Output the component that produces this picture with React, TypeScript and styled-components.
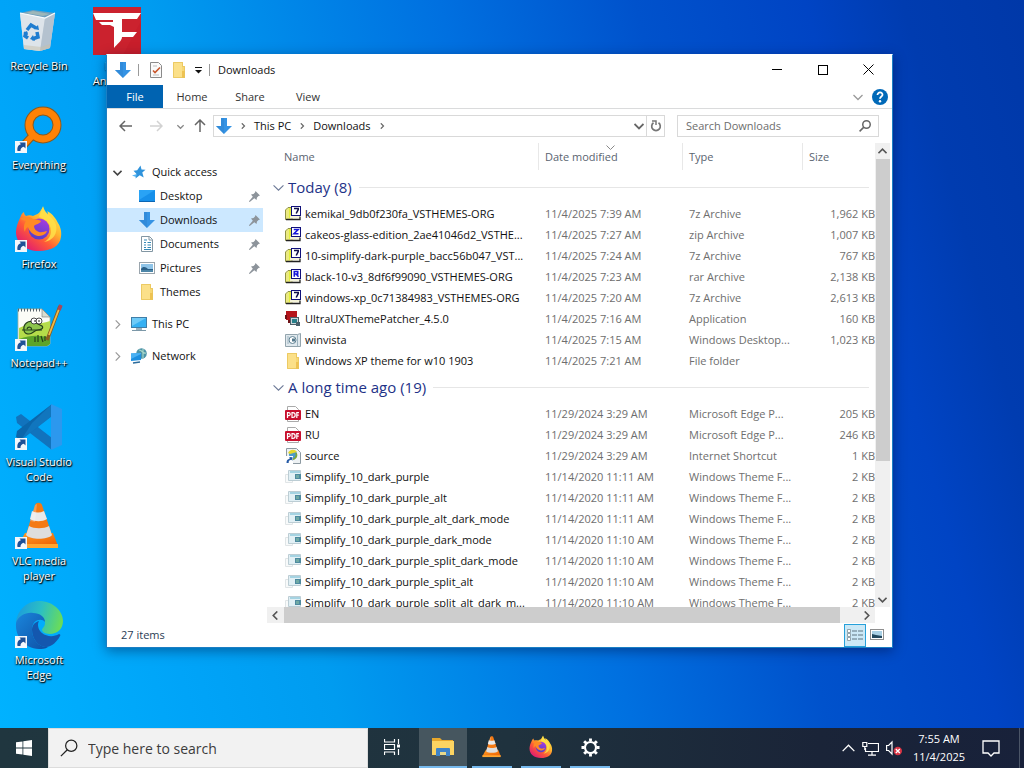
import React from "react";
import styled, { createGlobalStyle, css } from "styled-components";

const GlobalStyle = createGlobalStyle`
  * { box-sizing: border-box; }
  html, body, #root { height: 100%; }
  body {
    margin: 0;
    overflow: hidden;
    font-family: "Open Sans", "Noto Sans", sans-serif;
    font-size: 11px;
    line-height: 16px;
    color: #111;
  }
  button, input { font: inherit; color: inherit; border: 0; padding: 0; background: none; }
  svg { display: block; flex: none; }
`;

/* ---------- desktop ---------- */

const Screen = styled.div`
  height: 100vh;
  display: flex;
  flex-direction: column;
`;

const Desktop = styled.main`
  position: relative;
  flex: 1;
  min-height: 0;
  background: linear-gradient(75deg, #00b2ff 0%, #00a4f8 16%, #009cf0 28%, #0070e0 52%, #0052cc 68%, #0044c4 82%, #003cb0 90%, #0038a8 100%);
`;

const ShortcutGrid = styled.div`
  display: grid;
  grid-template-rows: repeat(7, 99px);
  grid-auto-flow: column;
  grid-auto-columns: 78px;
  height: 100%;
`;

const Shortcut = styled.button`
  display: flex;
  flex-direction: column;
  align-items: center;
  gap: 3px;
  padding-top: 7px;
  line-height: 15px;
  color: #fff;
  text-align: center;
  text-shadow: 0 1px 2px #000, 1px 1px 1px #000;
`;

const ShortcutLabel = styled.span`
  white-space: pre-line;
  width: 78px;
`;

/* ---------- explorer window ---------- */

const Window = styled.section`
  position: absolute;
  left: 106px;
  top: 54px;
  right: 131px;
  bottom: 80px;
  display: flex;
  flex-direction: column;
  background: #fff;
  border: 1px solid #1b7fc4;
  border-top-color: #fff;
  box-shadow: 0 3px 12px rgba(0, 0, 40, 0.4);
`;

const TitleBar = styled.header`
  display: flex;
  align-items: center;
  height: 30px;
  padding-left: 8px;
`;

const QuickTools = styled.div`
  display: flex;
  align-items: center;
  gap: 7px;
  padding-right: 8px;
`;

const Divider = styled.span`
  width: 1px;
  height: 12px;
  background: #9a9a9a;
  &:nth-child(2) { margin-right: 2px; }
`;

const WindowTitle = styled.h1`
  flex: 1;
  margin: 0;
  font-size: 11px;
  font-weight: 400;
`;

const CaptionButton = styled.button`
  width: 46px;
  height: 30px;
  display: flex;
  align-items: center;
  justify-content: center;
`;

const Ribbon = styled.nav`
  display: flex;
  align-items: stretch;
  height: 24px;
  border-bottom: 1px solid #dadbdc;
`;

const RibbonTab = styled.button<{ $file?: boolean }>`
  width: 58px;
  color: #333;
  ${(p) => p.$file && css`
    width: 56px;
    color: #fff;
    background: #0063b1;
  `}
`;

const RibbonEnd = styled.div`
  display: flex;
  align-items: center;
  gap: 9px;
  margin-left: auto;
  padding-right: 4px;
`;

const AddressRow = styled.div`
  display: flex;
  align-items: center;
  height: 34px;
  padding: 0 13px 0 4px;
`;

const Arrows = styled.div`
  display: flex;
  align-items: center;
  width: 102px;
`;

const Plain = styled.button`
  display: flex;
  align-items: center;
  justify-content: center;
`;

const ArrowButton = styled(Plain)<{ $width: number }>`
  width: ${(p) => p.$width}px;
  height: 22px;
`;

const AddressBox = styled.div`
  flex: 1;
  display: flex;
  align-items: center;
  height: 22px;
  border: 1px solid #d9d9d9;
`;

const Crumbs = styled.div`
  flex: 1;
  display: flex;
  align-items: center;
  gap: 8px;
  padding-left: 2px;
`;

const Refresh = styled(Plain)`
  width: 18px;
  height: 20px;
  margin-left: 2px;
  border-left: 1px solid #d9d9d9;
`;

const SearchBox = styled.label`
  display: flex;
  align-items: center;
  width: 202px;
  height: 22px;
  margin-left: 12px;
  padding: 0 7px 0 8px;
  border: 1px solid #d9d9d9;
  input {
    flex: 1;
    min-width: 0;
    outline: none;
  }
  input::placeholder { color: #6d6d6d; opacity: 1; }
`;

const Body = styled.div`
  flex: 1;
  display: flex;
  min-height: 0;
`;

const NavPane = styled.aside`
  width: 160px;
  padding: 17px 4px 0 0;
`;

const NavItem = styled.a<{ $depth?: number; $active?: boolean }>`
  display: flex;
  align-items: center;
  height: 24px;
  padding: 0 3px 0 ${(p) => (p.$depth ? 32 : 6)}px;
  gap: ${(p) => (p.$depth ? 5 : 0)}px;
  margin-bottom: ${(p) => (p.$depth ? 0 : 8)}px;
  color: inherit;
  text-decoration: none;
  background: ${(p) => (p.$active ? "#cce8ff" : "none")};
`;

const NavGroup = styled.div`
  margin: -8px 0 8px;
`;

const NavLabel = styled.span`
  flex: 1;
`;

const NavSymbol = styled.span`
  display: flex;
  justify-content: center;
  width: 18px;
  margin: 0 4px 0 8px;
`;

const ListPane = styled.div`
  flex: 1;
  min-width: 0;
  display: grid;
  grid-template-columns: minmax(0, 1fr) 15px;
  grid-template-rows: minmax(0, 1fr) 16px;
  padding-right: 2px;
`;

const ListView = styled.div`
  overflow: hidden;
`;

const Table = styled.table`
  width: 100%;
  table-layout: fixed;
  border-collapse: collapse;
  td, th { padding: 0; white-space: nowrap; font-weight: 400; text-align: left; }
  td { height: 21px; }
`;

const HeadCell = styled.th<{ $wide?: boolean }>`
  height: 28px;
  vertical-align: top;
  color: #5a6470;
  div {
    display: flex;
    flex-direction: column;
    justify-content: center;
    height: 27px;
    padding-left: ${(p) => (p.$wide ? 17 : 6)}px;
    border-right: 1px solid #e8e8e8;
  }
  &:last-child div { border-right-color: transparent; }
`;

const SortMark = styled.svg`
  position: absolute;
  left: 499px;
  top: 90px;
`;

const GroupHead = styled.th`
  height: 32px;
  color: #1e3287;
  font-size: 15px;
  div {
    display: flex;
    align-items: center;
    gap: 4px;
    padding: 0 6px;
  }
  div::after {
    content: "";
    flex: 1;
    height: 1px;
    margin-left: 3px;
    background: #e6e6e6;
  }
`;

const NameCell = styled.td`
  div {
    display: flex;
    align-items: center;
    gap: 4px;
    padding-left: 18px;
  }
`;

const MetaCell = styled.td<{ $end?: boolean }>`
  color: #6e6e6e;
  && {
    padding-left: ${(p) => (p.$end ? 0 : 6)}px;
    text-align: ${(p) => (p.$end ? "right" : "left")};
  }
`;

const VScroll = styled.div`
  display: flex;
  flex-direction: column;
  align-items: center;
  background: #f0f0f0;
`;

const VThumb = styled.div`
  width: 14px;
  flex: 0 0 65%;
  background: #cdcdcd;
`;

const ScrollTrack = styled.div`
  flex: 1;
`;

const HScroll = styled.div`
  display: flex;
  background: #f0f0f0;
`;

const HThumb = styled.div`
  flex: 1;
  margin-right: 18px;
  background: #cdcdcd;
`;

const ScrollButton = styled(Plain)`
  width: 17px;
  height: 16px;
`;

const StatusBar = styled.footer`
  display: flex;
  align-items: center;
  height: 24px;
  padding: 0 4px 0 14px;
  color: #2b3c55;
  span { flex: 1; }
`;

const ViewButton = styled(Plain)<{ $on?: boolean }>`
  width: 22px;
  height: 23px;
  border: 1px solid ${(p) => (p.$on ? "#26a0da" : "transparent")};
  background: ${(p) => (p.$on ? "#cbe8f6" : "none")};
`;

/* ---------- taskbar ---------- */

const Taskbar = styled.footer`
  display: flex;
  height: 40px;
  background: linear-gradient(90deg, #20363f 0%, #1f323e 50%, #1a2438 80%, #18213a 100%);
  color: #fff;
`;

const StartButton = styled(Plain)`
  width: 48px;
`;

const TaskSearch = styled.label`
  display: flex;
  align-items: center;
  gap: 10px;
  width: 320px;
  padding-left: 11px;
  border: 1px solid #dcdcdc;
  background: #f2f2f2;
  color: #333;
  font-size: 14px;
  input { flex: 1; min-width: 0; height: 24px; outline: none; }
  input::placeholder { color: #3c3c3c; opacity: 1; }
`;

const TaskApps = styled.div`
  display: flex;
  gap: 1px;
  flex: 1;
`;

const TaskButton = styled.button<{ $running?: boolean; $active?: boolean }>`
  display: flex;
  flex-direction: column;
  align-items: center;
  justify-content: center;
  width: 48px;
  background: ${(p) => (p.$active ? "#46565f" : "none")};
  &:first-child { margin-right: 2px; }
  svg { margin: auto; }
  &::after {
    content: "";
    width: ${(p) => (p.$active ? 48 : 40)}px;
    height: 2px;
    background: ${(p) => (p.$running ? "#76b9ed" : "transparent")};
  }
`;

const Tray = styled.div`
  display: flex;
  align-items: center;
  gap: 7px;
  padding-right: 4px;
`;

const Clock = styled.time`
  width: 60px;
  line-height: 18px;
  text-align: center;
`;

const NoticeButton = styled(Plain)`
  width: 30px;
  margin-right: 6px;
`;

const PeekEdge = styled.span`
  width: 1px;
  height: 40px;
  background: #4b5567;
`;

/* ---------- icons ---------- */

const ShortcutBadge = () => (
  <g>
    <rect x="0" y="35" width="12" height="12" fill="#f4f7fb" />
    <path d="M2.500 45c-.6-4 1-6.300 3.500-6.800L4.500 36.600l6-.1v6l-1.700-1.700C6.500 41.200 5.300 42.800 5.500 45z" fill="#1f5096" />
  </g>
);

const RecycleIcon = () => (
  <svg width="48" height="48" viewBox="0 0 48 48">
    <path d="M5 6l35 0-5 35-10 3-16-2z" fill="#cdd6df" />
    <path d="M5 6l13-3 22 3-10 5z" fill="#6f9fbd" />
    <path d="M10 6l8-2 17 3-7 2z" fill="#9db7b9" />
    <path d="M5 6l25 5-5 33-16-2z" fill="#dde4ea" />
    <path d="M30 11l10-5-5 35-10 3z" fill="#b4c2cf" />
    <path d="M5 6l25 5 10-5" fill="none" stroke="#f8fbfd" strokeWidth="1.200" />
    <path d="M9 38l17 2 9-3v4l-10 3-16-2z" fill="#c8bfa9" opacity=".5" />
    <g fill="none" stroke="#1f7dd0" strokeWidth="3.500">
      <path d="M12 23l4-5 5 3" /><path d="M22 25l1 5-6 2" /><path d="M13 31l-3-2 1-4" />
    </g>
    <path d="M19 22l5 1-1-5zM18 28l-3 4 5 2zM8 26l4-2 1 4z" fill="#1f7dd0" />
  </svg>
);

const FazeIcon = () => (
  <svg width="48" height="48" viewBox="0 0 48 48">
    <rect width="48" height="48" fill="#c81e2b" />
    <path d="M0 0h48v14L30 48H0z" fill="#cd2530" opacity=".6" />
    <path d="M0 6h48l-4 6H29v13h15l-4 5H29c0 4-5 7-8 11V20l-4-2H9l-3-3h14v-2H3z" fill="#fff" />
  </svg>
);

const EverythingIcon = () => (
  <svg width="48" height="48" viewBox="0 0 48 48">
    <path d="M20 27L6 42" stroke="#8a5a1e" strokeWidth="8" />
    <circle cx="28" cy="19" r="14" fill="none" stroke="#8a5a1e" strokeWidth="9" />
    <path d="M20 27L6 42" stroke="#ff8206" strokeWidth="6" />
    <circle cx="28" cy="19" r="14" fill="none" stroke="#ff8206" strokeWidth="7" />
    <ShortcutBadge />
  </svg>
);

const FirefoxShape = () => (
  <>
    <defs>
      <linearGradient id="ffBody" x1=".85" y1=".1" x2=".2" y2=".9">
        <stop offset="0" stopColor="#ffe94a" /><stop offset=".35" stopColor="#ffb32e" />
        <stop offset=".65" stopColor="#ff5b36" /><stop offset="1" stopColor="#e3206e" />
      </linearGradient>
      <linearGradient id="ffGlobe" x1=".7" y1="0" x2=".3" y2="1">
        <stop offset="0" stopColor="#a63be0" /><stop offset="1" stopColor="#5040c8" />
      </linearGradient>
    </defs>
    <path d="M5 13c1-3 2-5 4-6 0 2 1 3 2 4 2-1 5-1 7 0 3-1 6-3 6-3l4-6c1 4 4 7 5 8 0-3-1-4-1-4 6 3 9 8 11 12 2 3 4 8 3 14-1 9-10 14-22 14C10 46 1 38 1 27c0-5 2-10 4-14z" fill="url(#ffBody)" />
    <path d="M28 1c-1 4-3 7-4 11 6 2 12 6 12 14 0 5-3 9-7 11 9-1 14-9 12-17-1-4-5-8-8-11-3-2-4-5-5-8z" fill="#ffe049" opacity=".85" />
    <circle cx="24" cy="24" r="10.500" fill="url(#ffGlobe)" />
    <path d="M5 14c5-3 10-3 13 0 4 0 6 1 8 2-1 3-5 3-7 5 0 3 2 5 5 6 3 1 6-1 8-1-1 4-6 5-9 5-5-1-9-5-10-9-2 1-3 3-3 5-2-4-1-8 1-11z" fill="#ff8a24" />
  </>
);

const FirefoxIcon = () => (
  <svg width="48" height="48" viewBox="0 0 48 48"><FirefoxShape /><ShortcutBadge /></svg>
);

const NotepadIcon = () => (
  <svg width="48" height="48" viewBox="0 0 48 48">
    <path d="M3 5h24l8 8v27l-3 2H3z" fill="#fbfcf7" stroke="#aab49a" strokeWidth=".8" />
    <path d="M4 24c9-5 20-3 31-7v23l-3 2H4z" fill="#b5dc4a" />
    <path d="M4 35c12-4 20-4 31-1v6l-3 2H4z" fill="#5ca42b" />
    <path d="M3 6h24" stroke="#59646d" strokeWidth="3" strokeDasharray="1 2" />
    <path d="M27 5v8h8z" fill="#d8ddd0" stroke="#777" strokeWidth=".6" />
    <path d="M9 26c-1-6 4-10 10-8l8 4c2 2-1 4-4 4-4 0-5 4-9 4-2 0-5-1-5-4z" fill="#8cc44c" stroke="#26401a" strokeWidth="1.200" />
    <path d="M12 25c1-3 6-2 4 1M7 26h20M20 33v5M23 31v7M26 32l2 6M30 32v5" fill="none" stroke="#26401a" strokeWidth="1.200" />
    <circle cx="19" cy="17" r="3" fill="#fff" stroke="#222" strokeWidth=".8" /><circle cx="24" cy="17" r="3" fill="#fff" stroke="#222" strokeWidth=".8" />
    <circle cx="20" cy="17" r=".8" /><circle cx="24" cy="17" r=".8" />
    <path d="M45 2L34 31l-2 5" fill="none" stroke="#8a5c20" strokeWidth="3.500" />
    <path d="M44 5L34 31" stroke="#f0bb48" strokeWidth="1.800" />
    <path d="M46 1l-2 5" stroke="#a8485a" strokeWidth="3.500" />
    <ShortcutBadge />
  </svg>
);

const VsCodeIcon = () => (
  <svg width="48" height="48" viewBox="0 0 48 48">
    <path d="M1 14l5-3 31 24v12L2 20z" fill="#1173bd" />
    <path d="M1 34l5 3 31-24V1L2 28z" fill="#0b66ab" />
    <path d="M6 37l31-24V1L17 20z" fill="#1580cc" opacity=".6" />
    <path d="M36 1l11 5v36l-11 5z" fill="#2c98ee" />
    <ShortcutBadge />
  </svg>
);

const ConeShape = () => (
  <>
    <defs>
      <linearGradient id="coneBase" x1="0" y1="0" x2="1" y2="1">
        <stop offset="0" stopColor="#ff9f27" /><stop offset="1" stopColor="#ec5c00" />
      </linearGradient>
    </defs>
    <path d="M10 31h28l5 13H3z" fill="url(#coneBase)" />
    <path d="M3 42h40v4H3z" fill="#ffa630" />
    <path d="M20 3c1-3 6-3 7 0l10 30c-3 5-23 5-26 0z" fill="#f47a14" />
    <path d="M17 9c4 2 8 2 12 0l3 8c-5 3-12 3-17 0z" fill="#e9e9e9" />
    <path d="M14 24c5 3 15 3 20 0l3 9c-4 5-22 5-26 0z" fill="#dedede" />
    <path d="M20 3l-5 16 5 1 2-18z" fill="#fff" opacity=".25" />
  </>
);

const VlcIcon = () => (
  <svg width="48" height="48" viewBox="0 0 48 48"><ConeShape /><ShortcutBadge /></svg>
);

const EdgeIcon = () => (
  <svg width="48" height="48" viewBox="0 0 48 48">
    <defs>
      <linearGradient id="edgeTop" x1="0" y1=".3" x2="1" y2=".5">
        <stop offset="0" stopColor="#1c9bdd" /><stop offset=".5" stopColor="#2bbfc4" /><stop offset="1" stopColor="#6bdc58" />
      </linearGradient>
      <linearGradient id="edgeLow" x1="0" y1="0" x2="1" y2="1">
        <stop offset="0" stopColor="#1a86dc" /><stop offset="1" stopColor="#0e4fa4" />
      </linearGradient>
    </defs>
    <path d="M1 22C2 9 12 0 24 0c14 0 24 10 24 20 0 8-6 13-13 13-6 0-8-3-8-4 0-2 3-3 3-7 0-5-5-9-11-9-8 0-15 3-18 9z" fill="url(#edgeTop)" />
    <path d="M1 22c2-7 10-11 17-10 7 0 12 4 12 9-3-4-13-3-13 8 0 9 7 18 16 17-3 2-6 2-9 2C9 47 0 36 1 22z" fill="url(#edgeLow)" />
    <path d="M17 29c0-5 3-8 7-9-2 3-1 9 3 12 5 4 12 4 17 1 1 0 2 1 1 2-3 6-8 10-13 11-8 1-15-8-15-17z" fill="#1457ae" />
    <ShortcutBadge />
  </svg>
);

const DownArrow = ({ size = 16 }: { size?: number }) => (
  <svg width={size} height={size} viewBox="0 0 16 16">
    <path d="M5 0h6v8h5l-8 8-8-8h5z" fill="#3593e4" />
    <path d="M5 0h3v16L0 8h5z" fill="#2f86d3" opacity=".6" />
  </svg>
);

const Chevron = ({ dir, size = 8, color = "#555", weight = 1.3 }: { dir: "right" | "down" | "up" | "left"; size?: number; color?: string; weight?: number }) => {
  const turn = { right: 0, down: 90, left: 180, up: 270 }[dir];
  return (
    <svg width={size} height={size} viewBox="0 0 10 10">
      <path d="M3 .5L7.500 5 3 9.500" transform={`rotate(${turn} 5 5)`} fill="none" stroke={color} strokeWidth={weight} />
    </svg>
  );
};

const FolderIcon = () => (
  <svg width="16" height="16" viewBox="0 0 16 16">
    <path d="M2 0h10v4h2v12H2z" fill="#f7d774" />
    <path d="M2 0h9v16H2z" fill="#fbe089" />
    <path d="M11 9h3v7h-3z" fill="#eec252" />
    <path d="M2.500 .5h9v4h2v11h-11z" fill="none" stroke="#e9c45a" strokeWidth=".8" />
  </svg>
);

const PropsIcon = () => (
  <svg width="16" height="16" viewBox="0 0 16 16">
    <path d="M2.500 .5h8l3 3v12h-11z" fill="#fafafa" stroke="#8a8a8a" />
    <path d="M5 8.500l2 2 5-5" fill="none" stroke="#c9572c" strokeWidth="1.600" />
    <path d="M5 4h4M5 13h6" stroke="#bbb" />
  </svg>
);

const ToolbarMenuIcon = () => (
  <svg width="8" height="8" viewBox="0 0 8 8"><path d="M1 1.500h7" stroke="#111" /><path d="M1 4h7L4.500 7.500z" fill="#111" /></svg>
);

const NavArrow = ({ dir, color }: { dir: "left" | "right" | "up"; color: string }) => (
  <svg width="14" height="14" viewBox="0 0 14 14">
    <path d="M1 7h12M6 2L1 7l5 5" transform={`rotate(${{ left: 0, up: 90, right: 180 }[dir]} 7 7)`} fill="none" stroke={color} strokeWidth="1.500" />
  </svg>
);

const RefreshIcon = () => (
  <svg width="12" height="12" viewBox="0 0 12 12">
    <path d="M3.500 2.800A4.300 4.300 0 1 0 8.500 2.800" fill="none" stroke="#777" strokeWidth="1.700" />
    <path d="M2 1h4v4" fill="none" stroke="#777" strokeWidth="1.500" />
  </svg>
);

const Magnifier = ({ size = 14, color = "#555", weight = 1.4 }: { size?: number; color?: string; weight?: number }) => (
  <svg width={size} height={size} viewBox="0 0 16 16">
    <circle cx="10" cy="6" r="5" fill="none" stroke={color} strokeWidth={weight} />
    <path d="M6.500 9.500L.8 15.200" stroke={color} strokeWidth={weight} />
  </svg>
);

const HelpIcon = () => (
  <svg width="16" height="16" viewBox="0 0 16 16">
    <circle cx="8" cy="8" r="8" fill="#0069b8" />
    <path d="M5.500 6c0-3.500 5.300-3.300 5 0C10.300 7.500 8 7.600 8 9.800" fill="none" stroke="#fff" strokeWidth="1.800" />
    <circle cx="8" cy="12.200" r="1.200" fill="#fff" />
  </svg>
);

const StarIcon = () => (
  <svg width="14" height="14" viewBox="0 0 14 14">
    <path d="M8.500 .5l1 4 4 .3-3.200 2.700 1.400 5-4-2.300L3.500 13.500l.8-4.700L1.500 5.800l3.700-.6z" fill="#2f93dc" />
    <path d="M0 10.500l5-1.500-1 3z" fill="#55b4f2" />
  </svg>
);

const DesktopGlyph = () => (
  <svg width="16" height="16" viewBox="0 0 16 16">
    <rect x="0" y="2" width="16" height="12" fill="#1690ea" /><path d="M0 2h16L0 12z" fill="#29a3f5" /><path d="M0 13.500h16" stroke="#0b66b4" />
  </svg>
);

const DocumentGlyph = () => (
  <svg width="16" height="16" viewBox="0 0 16 16">
    <path d="M2.500 .5h8l3 3v12h-11z" fill="#fff" stroke="#8296a3" />
    <path d="M5 4h3M5 6.500h2M8.500 6.500H12M5 9h2M8.500 9H12M5 11.500h2M8.500 11.500H12M5 13.500h7" stroke="#3487b5" strokeWidth="1.200" />
    <path d="M10 .5v3.500h3.500" fill="none" stroke="#8296a3" />
  </svg>
);

const PictureGlyph = () => (
  <svg width="16" height="16" viewBox="0 0 16 16">
    <rect x=".5" y="2.500" width="15" height="11" fill="#fff" stroke="#9aa5ad" />
    <rect x="2" y="4" width="12" height="8" fill="#8fc4e8" /><path d="M2 9c2-3 5-2 7 0h5v3H2z" fill="#2b5f86" /><path d="M2 10h12v2H2z" fill="#4d86a8" />
  </svg>
);

const ComputerGlyph = () => (
  <svg width="16" height="16" viewBox="0 0 16 16">
    <rect x=".5" y="1.500" width="15" height="10" fill="#36b0f2" stroke="#3f7ea8" /><path d="M1 2h14L1 10z" fill="#6fcaf7" />
    <path d="M5 12h6v2H5z" fill="#9cb1bd" /><path d="M1 14.500h14" stroke="#7c98a8" />
  </svg>
);

const NetworkGlyph = () => (
  <svg width="16" height="16" viewBox="0 0 16 16">
    <circle cx="10.500" cy="5.500" r="5.300" fill="#4c93a8" /><path d="M8 2c4 0 3 4 7 3M12 1v9" fill="none" stroke="#a6d6c7" strokeWidth="1.200" />
    <path d="M0 5.500l10-.5v7L0 13z" fill="#1d8fe0" /><path d="M0 5.500l10-.5v1L0 11z" fill="#4ab1f3" /><path d="M2 15l7-1" stroke="#2c6c9c" strokeWidth="1.500" />
  </svg>
);

const PinGlyph = () => (
  <svg width="11" height="11" viewBox="0 0 11 11">
    <path d="M6.500 0L11 4.500 9.500 5 8 6.500 7.500 9 5.300 7.200 1 10.800 0 11l.2-1L3.800 5.700 2 3.500 4.500 3 6 1.500z" fill="#8d949b" />
  </svg>
);

const ArchiveIcon = ({ mark }: { mark: "7" | "Z" | "R" }) => {
  const path = { "7": "M9 2.500h4.200v1L11.200 7.500", Z: "M8.800 2.500h4.400L8.900 6.800h4.600", R: "M9.300 7.700v-5.200h3.400v2.500H9.300M11.200 5l2.300 2.700" }[mark];
  return (
    <svg width="16" height="16" viewBox="0 0 16 16">
      <path d="M.5 4L3 1.500h4v12H.5z" fill="#ebea80" stroke="#8f9148" />
      <path d="M4 2h3v10H4z" fill="#e3ee3a" />
      <path d="M5 9.500h10v3H5z" fill="#f4f3d8" />
      <path d="M1 13.500h14v-3" fill="none" stroke="#222" strokeWidth="1.300" />
      <rect x="6.500" y=".5" width="9" height="9" fill="#fff" stroke="#10107a" />
      <path d={path} fill="none" stroke={mark === "7" ? "#10104a" : "#1717d8"} strokeWidth="1.600" />
    </svg>
  );
};

const PatcherIcon = () => (
  <svg width="16" height="16" viewBox="0 0 16 16">
    <rect x="1" y="0" width="11" height="9" fill="#b5161c" /><path d="M0 4h2v4H0zM3 9h5v3H3z" fill="#6d1216" />
    <rect x="5.500" y="6.500" width="8" height="7" fill="#c9d4d8" stroke="#4b5f68" /><rect x="7" y="8" width="5" height="4" fill="#277f8a" />
    <path d="M11 11h4v4h-4z" fill="#49606b" />
  </svg>
);

const WinVistaIcon = () => (
  <svg width="16" height="16" viewBox="0 0 16 16">
    <path d="M.5 2.500h12l3-1v13H.5z" fill="#dfe8ed" stroke="#93a4ad" />
    <circle cx="7.500" cy="8" r="3.500" fill="#fff" stroke="#5f8192" /><path d="M7 6.500h3v3H7z" fill="#55798c" /><path d="M12.500 3v11M3 4v8" stroke="#9eb4c0" />
  </svg>
);

const PdfIcon = () => (
  <svg width="16" height="16" viewBox="0 0 16 16">
    <path d="M2.500 5V.5h8l3 3V15.500h-11z" fill="#fff" stroke="#aaa" />
    <rect x="0" y="4" width="16" height="10" rx="1" fill="#c8102e" />
    <path d="M2.500 12V6.700h1.300a1.300 1.300 0 0 1 0 2.900H2.500M7 6.700V11.500h.8a2.300 2.300 0 0 0 0-4.800zM11.800 12V6.700H14M11.800 9.200h2" fill="none" stroke="#fff" strokeWidth="1.200" />
  </svg>
);

const LinkIcon = () => (
  <svg width="16" height="16" viewBox="0 0 16 16">
    <path d="M1.500 .5h10l4 4v11h-14z" fill="#eef2f4" stroke="#8c99a1" />
    <circle cx="8" cy="6.500" r="4" fill="#4c9bc9" /><path d="M3 5c2-4 7-4 9-1L5 6z" fill="#e4d72c" /><path d="M11 5c2 4-2 7-5 6" fill="none" stroke="#7aa43a" strokeWidth="1.500" />
    <rect x="0" y="8" width="8" height="8" fill="#fff" /><path d="M1.500 15c0-3 1-4 3-4V9l3 .2v3.600l-1.200-1C4 12 3.500 13.500 3.700 15z" fill="#2459a5" />
  </svg>
);

const ThemeIcon = () => (
  <svg width="16" height="16" viewBox="0 0 16 16">
    <path d="M.5 5.500h7v8h-7z" fill="#f8fafa" stroke="#e0e5e7" />
    <path d="M3.500 1.500h12v10h-12z" fill="#e2f0f5" stroke="#bccdd4" />
    <path d="M5 2h10v2H5z" fill="#a5d3e2" /><path d="M10 5h6v5h-6z" fill="#4d8aa0" /><path d="M11 6h3v3h-3z" fill="#6fa9a4" />
  </svg>
);

const DetailsViewIcon = () => (
  <svg width="16" height="14" viewBox="0 0 16 14">
    <path d="M.5 1.500h3v3h-3zM.5 5.500h3v3h-3zM.5 9.500h3v3h-3z" fill="#fff" stroke="#7d8f98" strokeWidth=".8" />
    <path d="M5 3h5M11 3h5M5 7h5M11 7h5M5 11h5M11 11h5" stroke="#5f7480" />
  </svg>
);

const ThumbViewIcon = () => (
  <svg width="14" height="12" viewBox="0 0 14 12">
    <rect x=".5" y=".5" width="13" height="10" fill="#fff" stroke="#8f8f8f" /><rect x="2" y="2" width="10" height="7" fill="#a9d0e5" /><path d="M2 5l4 1 6 1v2H2z" fill="#22485e" />
  </svg>
);

const StartIcon = () => (
  <svg width="16" height="16" viewBox="0 0 16 16">
    <path d="M0 2.300l6.500-.9v6.200H0zM7.300 1.300L16 0v7.600H7.300zM0 8.400h6.500v6.200L0 13.700zM7.300 8.400H16V16l-8.700-1.300z" fill="#fff" />
  </svg>
);

const TaskViewIcon = () => (
  <svg width="17" height="16" viewBox="0 0 17 16">
    <path d="M.5 0v3h10V0M.5 16v-3h10v3M.5 5.500h10v5H.5zM14.500 0v5M14.500 10v6" fill="none" stroke="#fff" strokeWidth="1.200" />
    <rect x="13" y="5.500" width="3" height="3" fill="#fff" />
  </svg>
);

const ExplorerIcon = () => (
  <svg width="22" height="20" viewBox="0 0 22 20">
    <path d="M0 1h8l2 2h11v6H0z" fill="#e8a82c" /><path d="M0 4h22v14H0z" fill="#fcd462" />
    <path d="M4 12q0-1 1-1h12q1 0 1 1v7h-4v-4H8v4H4z" fill="#3f84c8" /><path d="M8 15h6v3H8z" fill="#e8d98a" />
  </svg>
);

const SettingsIcon = () => (
  <svg width="19" height="19" viewBox="0 0 20 20">
    <circle cx="10" cy="10" r="5.800" fill="none" stroke="#fff" strokeWidth="2.200" />
    <g stroke="#fff" strokeWidth="3">
      <path d="M10 .5v3M10 16.500v3M.5 10h3M16.500 10h3M3.300 3.300l2.300 2.300M14.400 14.400l2.300 2.300M3.300 16.700l2.300-2.300M14.400 5.600l2.300-2.300" />
    </g>
  </svg>
);

const TrayNetIcon = () => (
  <svg width="17" height="15" viewBox="0 0 17 15">
    <path d="M6 2.500h10.500v8H3.500V7M10 10.500v3.500M6 14.200h8" fill="none" stroke="#fff" strokeWidth="1.200" />
    <path d="M.8 1.500h4v4h-4zM2.800 5.500V9" fill="none" stroke="#fff" strokeWidth="1.200" />
  </svg>
);

const TrayMuteIcon = () => (
  <svg width="16" height="16" viewBox="0 0 16 16">
    <path d="M.6 5.500h2L6 2v12l-3.400-3.500h-2z" fill="none" stroke="#fff" strokeWidth="1.200" />
    <circle cx="11.800" cy="11" r="4.200" fill="#d93444" /><path d="M9.800 9l4 4M13.800 9l-4 4" stroke="#fff" strokeWidth="1.300" />
  </svg>
);

const NoticeIcon = () => (
  <svg width="18" height="17" viewBox="0 0 18 17">
    <path d="M1 1h16v12h-5l-3 3-3-3H1z" fill="none" stroke="#fff" strokeWidth="1.300" />
  </svg>
);

/* ---------- content ---------- */

const shortcuts: { label: string; icon: React.ReactNode }[] = [
  { label: "Recycle Bin", icon: <RecycleIcon /> },
  { label: "Everything", icon: <EverythingIcon /> },
  { label: "Firefox", icon: <FirefoxIcon /> },
  { label: "Notepad++", icon: <NotepadIcon /> },
  { label: "Visual Studio\nCode", icon: <VsCodeIcon /> },
  { label: "VLC media\nplayer", icon: <VlcIcon /> },
  { label: "Microsoft\nEdge", icon: <EdgeIcon /> },
  { label: "FaZe\nAnticheat", icon: <FazeIcon /> },
];

const quickLinks = [
  { label: "Desktop", icon: <DesktopGlyph />, pinned: true },
  { label: "Downloads", icon: <DownArrow />, pinned: true, active: true },
  { label: "Documents", icon: <DocumentGlyph />, pinned: true },
  { label: "Pictures", icon: <PictureGlyph />, pinned: true },
  { label: "Themes", icon: <FolderIcon />, pinned: false },
];

type FileRow = [React.ReactNode, string, string, string, string];

const theme = (name: string, time: string): FileRow => [<ThemeIcon />, name, `11/14/2020 ${time}`, "Windows Theme F...", "2 KB"];

const groups: { title: string; rows: FileRow[] }[] = [
  {
    title: "Today (8)",
    rows: [
      [<ArchiveIcon mark="7" />, "kemikal_9db0f230fa_VSTHEMES-ORG", "11/4/2025 7:39 AM", "7z Archive", "1,962 KB"],
      [<ArchiveIcon mark="Z" />, "cakeos-glass-edition_2ae41046d2_VSTHE...", "11/4/2025 7:27 AM", "zip Archive", "1,007 KB"],
      [<ArchiveIcon mark="7" />, "10-simplify-dark-purple_bacc56b047_VST...", "11/4/2025 7:24 AM", "7z Archive", "767 KB"],
      [<ArchiveIcon mark="R" />, "black-10-v3_8df6f99090_VSTHEMES-ORG", "11/4/2025 7:23 AM", "rar Archive", "2,138 KB"],
      [<ArchiveIcon mark="7" />, "windows-xp_0c71384983_VSTHEMES-ORG", "11/4/2025 7:20 AM", "7z Archive", "2,613 KB"],
      [<PatcherIcon />, "UltraUXThemePatcher_4.5.0", "11/4/2025 7:16 AM", "Application", "160 KB"],
      [<WinVistaIcon />, "winvista", "11/4/2025 7:15 AM", "Windows Desktop...", "1,023 KB"],
      [<FolderIcon />, "Windows XP theme for w10 1903", "11/4/2025 7:21 AM", "File folder", ""],
    ],
  },
  {
    title: "A long time ago (19)",
    rows: [
      [<PdfIcon />, "EN", "11/29/2024 3:29 AM", "Microsoft Edge P...", "205 KB"],
      [<PdfIcon />, "RU", "11/29/2024 3:29 AM", "Microsoft Edge P...", "246 KB"],
      [<LinkIcon />, "source", "11/29/2024 3:29 AM", "Internet Shortcut", "1 KB"],
      theme("Simplify_10_dark_purple", "11:11 AM"),
      theme("Simplify_10_dark_purple_alt", "11:11 AM"),
      theme("Simplify_10_dark_purple_alt_dark_mode", "11:11 AM"),
      theme("Simplify_10_dark_purple_dark_mode", "11:10 AM"),
      theme("Simplify_10_dark_purple_split_dark_mode", "11:10 AM"),
      theme("Simplify_10_dark_purple_split_alt", "11:10 AM"),
      theme("Simplify_10_dark_purple_split_alt_dark_m...", "11:10 AM"),
    ],
  },
];

const FileTable = () => (
  <Table>
    <colgroup>
      <col width="272" /><col width="144" /><col width="120" /><col />
    </colgroup>
    <thead>
      <tr>
        <HeadCell $wide><div>Name</div></HeadCell>
        <HeadCell><div>Date modified</div></HeadCell>
        <HeadCell><div>Type</div></HeadCell>
        <HeadCell><div>Size</div></HeadCell>
      </tr>
    </thead>
    {groups.map((g) => (
      <tbody key={g.title}>
        <tr>
          <GroupHead colSpan={4}><div><Chevron dir="down" size={11} color="#6b7896" weight={1} />{g.title}</div></GroupHead>
        </tr>
        {g.rows.map(([icon, name, date, type, size]) => (
          <tr key={name}>
            <NameCell><div>{icon}{name}</div></NameCell>
            <MetaCell>{date}</MetaCell>
            <MetaCell>{type}</MetaCell>
            <MetaCell $end>{size}</MetaCell>
          </tr>
        ))}
      </tbody>
    ))}
  </Table>
);

const Explorer = () => (
  <Window aria-label="Downloads">
    <TitleBar>
      <QuickTools>
        <DownArrow />
        <Divider />
        <Plain aria-label="Properties"><PropsIcon /></Plain>
        <Plain aria-label="New folder"><FolderIcon /></Plain>
        <Plain aria-label="Customize toolbar"><ToolbarMenuIcon /></Plain>
        <Divider />
      </QuickTools>
      <WindowTitle>Downloads</WindowTitle>
      <CaptionButton aria-label="Minimize"><svg width="10" height="10"><path d="M0 4.500h10" stroke="#000" /></svg></CaptionButton>
      <CaptionButton aria-label="Maximize"><svg width="10" height="10"><rect x=".5" y=".5" width="9" height="9" fill="none" stroke="#000" /></svg></CaptionButton>
      <CaptionButton aria-label="Close"><svg width="12" height="12"><path d="M.5 .5l10 10M10.500 .5l-10 10" stroke="#000" /></svg></CaptionButton>
    </TitleBar>
    <Ribbon>
      <RibbonTab $file>File</RibbonTab>
      <RibbonTab>Home</RibbonTab>
      <RibbonTab>Share</RibbonTab>
      <RibbonTab>View</RibbonTab>
      <RibbonEnd>
        <Plain aria-label="Expand ribbon"><Chevron dir="down" size={10} color="#9a9a9a" /></Plain>
        <Plain aria-label="Help"><HelpIcon /></Plain>
      </RibbonEnd>
    </Ribbon>
    <AddressRow>
      <Arrows>
        <ArrowButton $width={30} aria-label="Back"><NavArrow dir="left" color="#666" /></ArrowButton>
        <ArrowButton $width={30} aria-label="Forward"><NavArrow dir="right" color="#d2d2d2" /></ArrowButton>
        <ArrowButton $width={18} aria-label="Recent"><Chevron dir="down" size={7} color="#888" weight={1.800} /></ArrowButton>
        <ArrowButton $width={22} aria-label="Up"><NavArrow dir="up" color="#666" /></ArrowButton>
      </Arrows>
      <AddressBox>
        <Crumbs>
          <DownArrow />
          <Chevron dir="right" size={6} color="#666" weight={2} />
          <Plain>This PC</Plain>
          <Chevron dir="right" size={6} color="#666" weight={2} />
          <Plain>Downloads</Plain>
          <Chevron dir="right" size={6} color="#666" weight={2} />
        </Crumbs>
        <Plain aria-label="Previous locations"><Chevron dir="down" size={10} color="#666" weight={1.800} /></Plain>
        <Refresh aria-label="Refresh"><RefreshIcon /></Refresh>
      </AddressBox>
      <SearchBox>
        <input aria-label="Search Downloads" placeholder="Search Downloads" />
        <Magnifier size={12} color="#666" weight={2} />
      </SearchBox>
    </AddressRow>
    <Body>
      <NavPane>
        <NavItem href="#quick"><Chevron dir="down" size={9} color="#444" weight={1.800} /><NavSymbol><StarIcon /></NavSymbol><NavLabel>Quick access</NavLabel></NavItem>
        <NavGroup>
          {quickLinks.map((q) => (
            <NavItem key={q.label} href={`#${q.label}`} $depth={1} $active={q.active}>
              {q.icon}
              <NavLabel>{q.label}</NavLabel>
              {q.pinned && <PinGlyph />}
            </NavItem>
          ))}
        </NavGroup>
        <NavItem href="#pc"><Chevron dir="right" size={9} color="#999" /><NavSymbol><ComputerGlyph /></NavSymbol><NavLabel>This PC</NavLabel></NavItem>
        <NavItem href="#network"><Chevron dir="right" size={9} color="#999" /><NavSymbol><NetworkGlyph /></NavSymbol><NavLabel>Network</NavLabel></NavItem>
      </NavPane>
      <ListPane>
        <ListView><FileTable /></ListView>
        <VScroll>
          <ScrollButton aria-label="Scroll up"><Chevron dir="up" size={9} weight={1.800} /></ScrollButton>
          <VThumb />
          <ScrollTrack />
          <ScrollButton aria-label="Scroll down"><Chevron dir="down" size={9} weight={1.800} /></ScrollButton>
        </VScroll>
        <HScroll>
          <ScrollButton aria-label="Scroll left"><Chevron dir="left" size={9} weight={1.800} /></ScrollButton>
          <HThumb />
          <ScrollButton aria-label="Scroll right"><Chevron dir="right" size={9} weight={1.800} /></ScrollButton>
        </HScroll>
      </ListPane>
    </Body>
    <StatusBar>
      <span>27 items</span>
      <ViewButton $on aria-label="Details"><DetailsViewIcon /></ViewButton>
      <ViewButton aria-label="Thumbnails"><ThumbViewIcon /></ViewButton>
    </StatusBar>
    <SortMark width="9" height="6" viewBox="0 0 9 6"><path d="M.5 .5l4 4 4-4" fill="none" stroke="#888" /></SortMark>
  </Window>
);

export default function App() {
  return (
    <Screen>
      <GlobalStyle />
      <Desktop>
        <ShortcutGrid>
          {shortcuts.map((s) => (
            <Shortcut key={s.label}>{s.icon}<ShortcutLabel>{s.label}</ShortcutLabel></Shortcut>
          ))}
        </ShortcutGrid>
        <Explorer />
      </Desktop>
      <Taskbar>
        <StartButton aria-label="Start"><StartIcon /></StartButton>
        <TaskSearch>
          <Magnifier size={18} color="#222" weight={1.100} />
          <input aria-label="Type here to search" placeholder="Type here to search" />
        </TaskSearch>
        <TaskApps>
          <TaskButton aria-label="Task view"><TaskViewIcon /></TaskButton>
          <TaskButton aria-label="File Explorer" $running $active><ExplorerIcon /></TaskButton>
          <TaskButton aria-label="VLC" $running><svg width="22" height="22" viewBox="0 0 48 48"><ConeShape /></svg></TaskButton>
          <TaskButton aria-label="Firefox" $running><svg width="24" height="24" viewBox="0 0 48 48"><FirefoxShape /></svg></TaskButton>
          <TaskButton aria-label="Settings" $running><SettingsIcon /></TaskButton>
        </TaskApps>
        <Tray>
          <Plain aria-label="Show hidden icons"><Chevron dir="up" size={13} color="#fff" weight={1} /></Plain>
          <TrayNetIcon />
          <TrayMuteIcon />
          <Clock>7:55 AM<br />11/4/2025</Clock>
          <NoticeButton aria-label="Notifications"><NoticeIcon /></NoticeButton>
          <PeekEdge />
        </Tray>
      </Taskbar>
    </Screen>
  );
}
